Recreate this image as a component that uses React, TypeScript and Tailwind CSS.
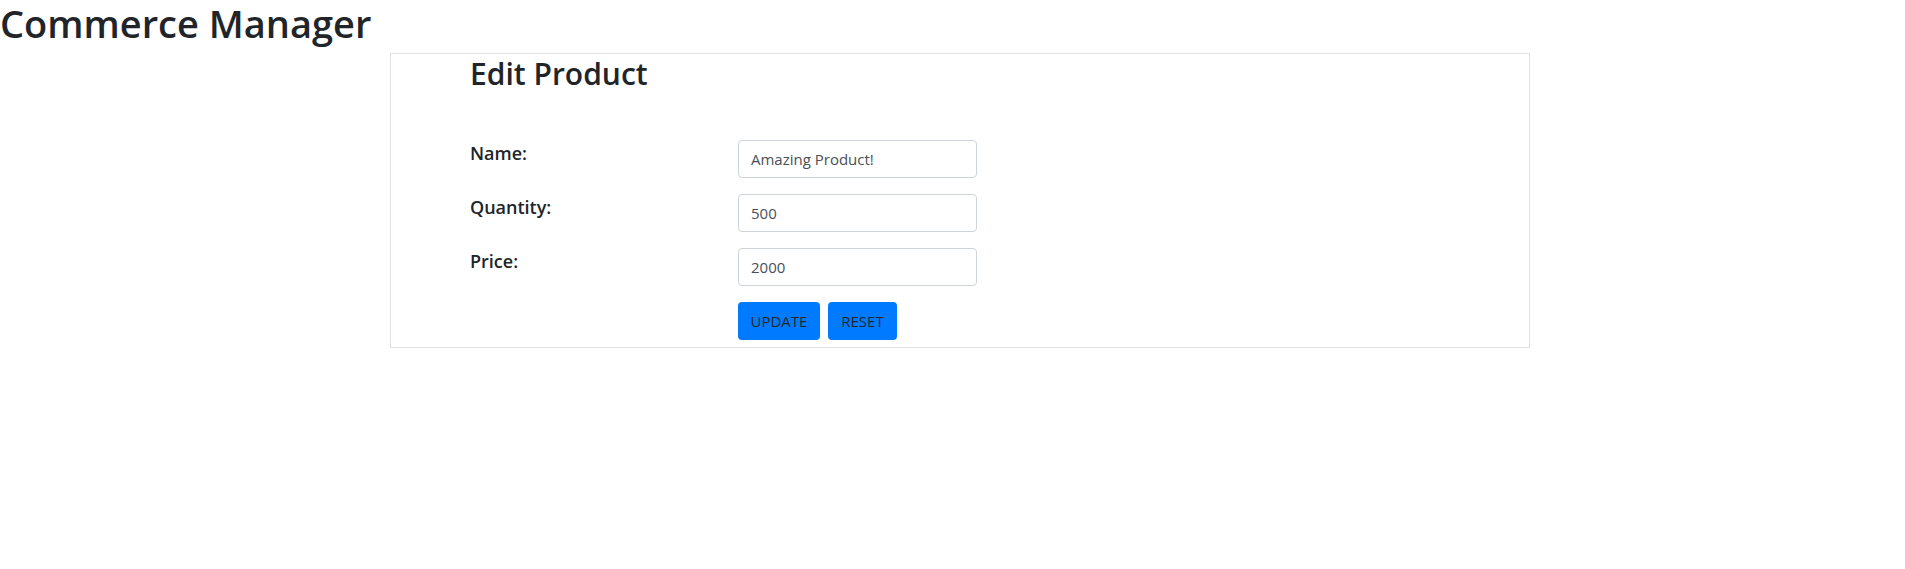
import React from "react";

const font = { fontFamily: '"Open Sans", "Noto Sans", sans-serif' };

function Row({ label, value }: { label: string; value: string }) {
  return (
    <div className="flex items-start">
      <label className="w-[268px] text-[18px] leading-[27px] font-semibold text-[#212529]">{label}</label>
      <input
        readOnly
        value={value}
        className="w-[239px] h-[38px] px-[12px] border border-[#ced4da] rounded-[4px] text-[15px] text-[#495057] bg-white outline-none"
      />
    </div>
  );
}

export default function App() {
  return (
    <div className="bg-white min-h-[569px] text-[#212529]" style={font}>
      <h1 className="text-[38px] leading-[46px] font-semibold m-0">Commerce Manager</h1>
      <div className="ml-[390px] mt-[7px] w-[1140px] border border-[#dee2e6] pl-[79px] pb-[7px]">
        <h2 className="text-[30px] leading-[38px] font-semibold mt-[1px] mb-[47px]">Edit Product</h2>
        <div className="flex flex-col gap-[16px]">
          <Row label="Name:" value="Amazing Product!" />
          <Row label="Quantity:" value="500" />
          <Row label="Price:" value="2000" />
          <div className="flex gap-[8px] pl-[268px]">
            <button className="h-[38px] w-[82px] rounded-[4px] bg-[#007bff] text-[#212529] text-[15px] leading-none">UPDATE</button>
            <button className="h-[38px] w-[69px] rounded-[4px] bg-[#007bff] text-[#212529] text-[15px] leading-none">RESET</button>
          </div>
        </div>
      </div>
    </div>
  );
}
